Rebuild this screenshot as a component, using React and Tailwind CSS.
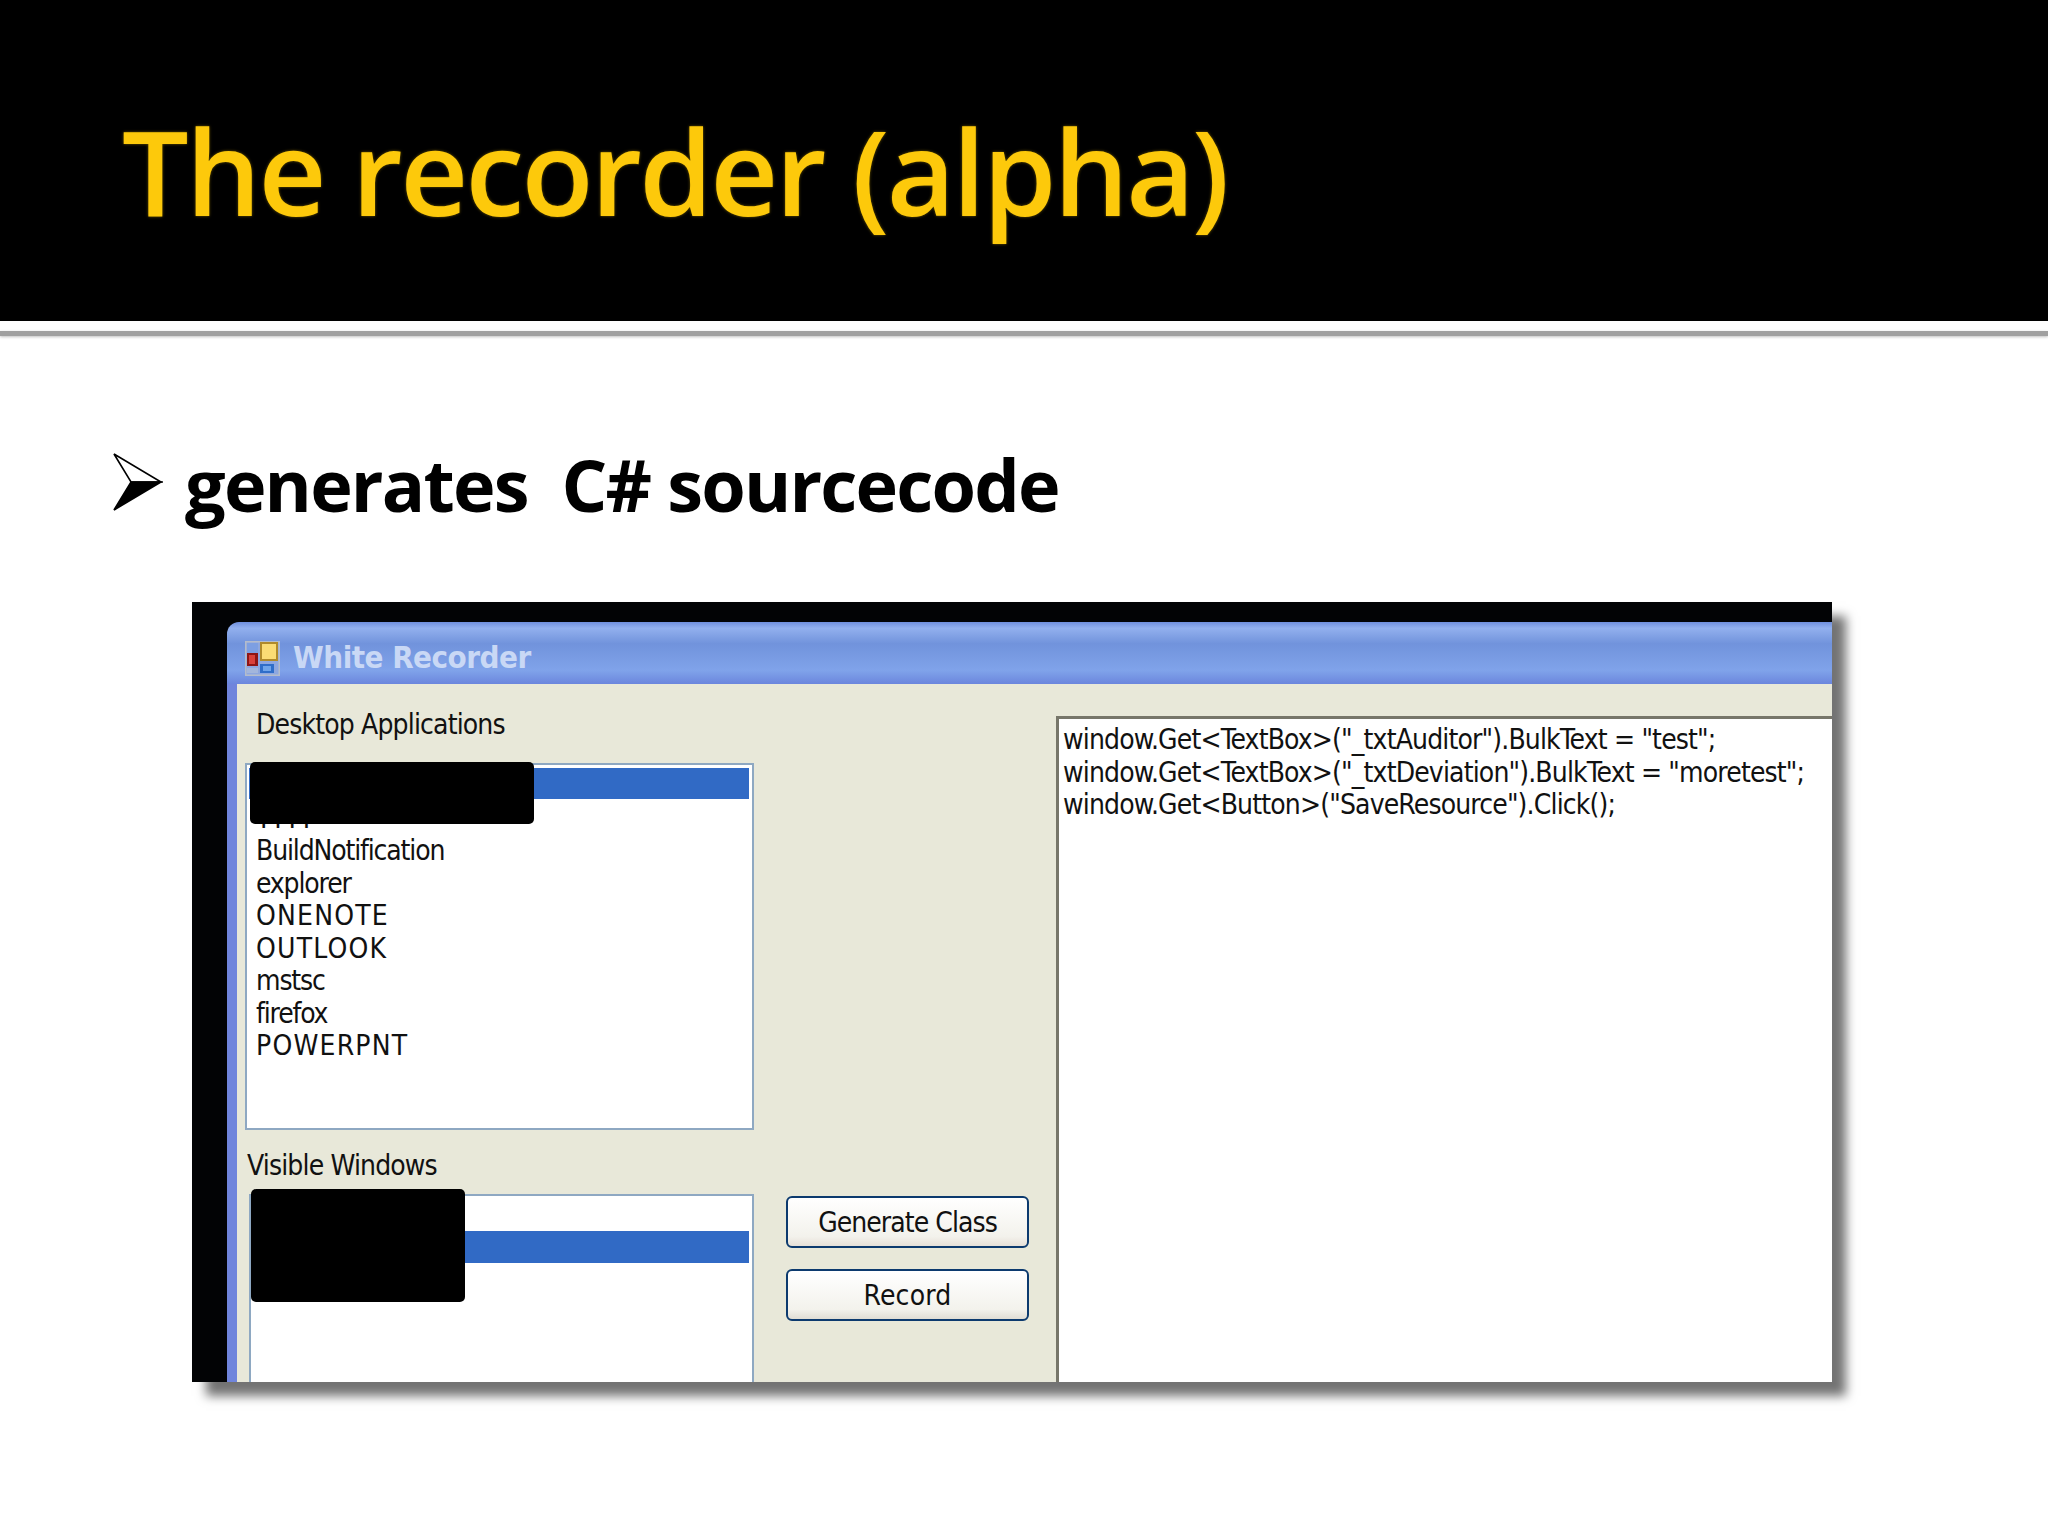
const ListRow = ({ children, wide }) => (
  <div className={`h-[32.5px] pl-[9px] pt-[2px] leading-[32.5px] whitespace-pre ${wide ? "tracking-[1.2px]" : "tracking-[-1.15px]"}`}>{children}</div>
);

function AppIcon() {
  return (
    <svg viewBox="0 0 35 35" className="w-[35px] h-[35px] shrink-0 mt-[10px]">
      <rect x="0.75" y="0.75" width="33.5" height="33.5" fill="#8ea7df" stroke="#b4bccb" strokeWidth="1.5" />
      <rect x="2" y="2" width="11" height="10" fill="#7d9fe2" />
      <rect x="15" y="1" width="18" height="19" fill="#b08a2a" />
      <rect x="17" y="3" width="14" height="15" fill="#fbdc74" />
      <rect x="2" y="12" width="11" height="13" fill="#8f1515" />
      <rect x="4" y="14" width="6" height="9" fill="#d9403a" />
      <rect x="15" y="23" width="14" height="9" fill="#2f6ec9" />
      <rect x="18" y="25" width="8" height="5" fill="#6fa5ea" />
      <path d="M2 27h11v5H2z" fill="#a3b6dc" />
    </svg>
  );
}

export default function App() {
  const smallText = "font-['DejaVu_Sans'] [font-stretch:condensed] text-[28px] tracking-[-0.85px] text-[#111]";
  return (
    <div className="w-[2048px] h-[1536px] bg-white overflow-hidden font-['Open_Sans',sans-serif]">
      <header className="h-[321px] bg-black flex items-center pl-[122px]">
        <h1 className="font-['Open_Sans',sans-serif] font-semibold text-[118px] leading-none text-[#fdc90b] tracking-[-2.6px] whitespace-pre pt-[20px] [text-shadow:0_0_3px_rgba(253,201,11,0.45)]">
          The recorder (alpha)
        </h1>
      </header>
      <div className="mt-[10px] h-[5px] bg-[#a0a0a0] shadow-[0_1px_3px_rgba(0,0,0,0.25)]" />

      <div className="h-[266px] flex items-start pl-[113px] pt-[104px] gap-[22px]">
        <svg viewBox="0 0 50 58" className="w-[50px] h-[58px] mt-[13px] shrink-0">
          <path d="M1 1 L48 29 L18 29 Z" fill="#fff" stroke="#000" strokeWidth="1.6" strokeLinejoin="miter" />
          <path d="M1 57 L48 29 L18 29 Z" fill="#000" stroke="#000" strokeWidth="1.6" />
        </svg>
        <p className="font-bold text-[72px] leading-[92px] -mt-[2px] text-black tracking-[-1.8px] whitespace-pre">
          generates  C# sourcecode
        </p>
      </div>

      <div className="ml-[192px] w-[1640px] h-[780px] relative shadow-[14px_14px_10px_rgba(0,0,0,0.55)]">
        <div className="w-full h-full bg-[#020305] overflow-hidden pt-[20px] pl-[35px]">
          <div className="w-[1625px] h-[760px] flex flex-col">
            <div className="h-[62px] rounded-tl-[12px] bg-[linear-gradient(180deg,#6f8fdd_0%,#92b0ee_10%,#7193dc_35%,#80a3ea_78%,#6b86dd_100%)] flex items-center pl-[18px] gap-[13px]">
              <AppIcon />
              <span className="font-['DejaVu_Sans'] [font-stretch:condensed] font-bold text-[31px] tracking-[-0.5px] pt-[8px] text-[#c9d8f5]">
                White Recorder
              </span>
            </div>
            <div className="flex-1 min-h-0 flex border-l-[10px] border-[#7085dc] bg-[#e8e8d9]">
              <div className={`w-[517px] shrink-0 flex flex-col pl-[8px] ${smallText}`}>
                <div className="h-[79px] pl-[11px] pt-[26px] leading-[30px]">Desktop Applications</div>
                <div className="w-[509px] h-[367px] shrink-0 border-2 border-[#8ea8c2] bg-white pt-[3px] pr-[3px]">
                  <div className="h-[31px] mb-[1.5px] ml-[2px] bg-[#316ac5]" />
                  <ListRow>YYYY</ListRow>
                  <ListRow>BuildNotification</ListRow>
                  <ListRow>explorer</ListRow>
                  <ListRow wide>ONENOTE</ListRow>
                  <ListRow wide>OUTLOOK</ListRow>
                  <ListRow>mstsc</ListRow>
                  <ListRow>firefox</ListRow>
                  <ListRow wide>POWERPNT</ListRow>
                </div>
                <div className="h-[64px] shrink-0 pl-[2px] pt-[21px] leading-[30px]">Visible Windows</div>
                <div className="w-[505px] ml-[4px] flex-1 border-2 border-b-0 border-[#8ea8c2] bg-white pt-[35px] pr-[3px]">
                  <div className="h-[32px] bg-[#316ac5]" />
                </div>
              </div>
              <div className={`w-[243px] ml-[32px] shrink-0 pt-[512px] flex flex-col gap-[21px] ${smallText}`}>
                <button className="h-[52px] pt-[2px] rounded-[6px] border-2 border-[#0c3a6e] bg-[linear-gradient(180deg,#ffffff_0%,#f3f2ec_80%,#e6e0d8_100%)] tracking-[-0.95px]">Generate Class</button>
                <button className="h-[52px] pt-[2px] rounded-[6px] border-2 border-[#0c3a6e] bg-[linear-gradient(180deg,#ffffff_0%,#f3f2ec_80%,#e0ddd4_100%)] tracking-[0.2px]">Record</button>
              </div>
              <div className={`flex-1 ml-[27px] mt-[32px] border-t-[3px] border-l-[3px] border-[#77766a] bg-white pl-[4px] pt-[5px] whitespace-pre leading-[32.5px] ${smallText}`}>
                <div>{'window.Get<TextBox>("_txtAuditor").BulkText = "test";'}</div>
                <div>{'window.Get<TextBox>("_txtDeviation").BulkText = "moretest";'}</div>
                <div>{'window.Get<Button>("SaveResource").Click();'}</div>
              </div>
            </div>
          </div>
        </div>
        <div className="absolute left-[58px] top-[160px] w-[284px] h-[62px] bg-black rounded-[5px]" />
        <div className="absolute left-[59px] top-[587px] w-[214px] h-[113px] bg-black rounded-[5px]" />
      </div>
    </div>
  );
}
